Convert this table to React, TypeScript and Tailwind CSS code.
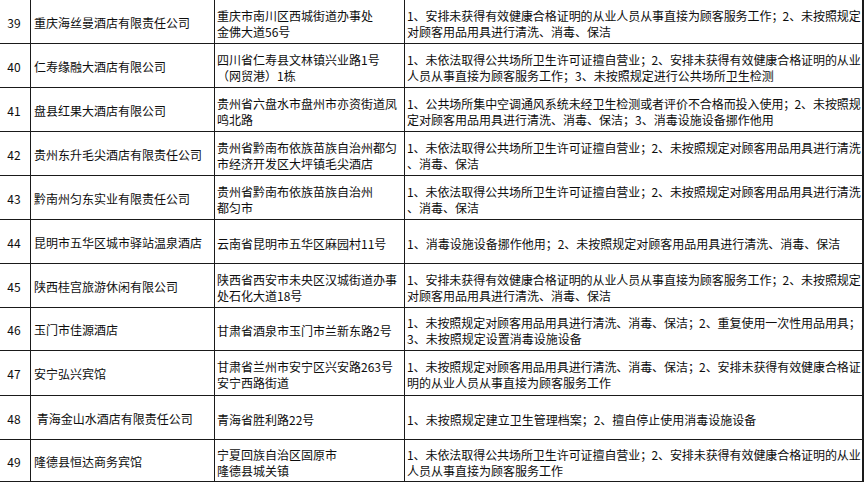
import React from "react";

interface Row {
  no: number;
  name: string;
  address: string[];
  issues: string[];
  h: string;
}

const ISSUE_A = [
  "1、安排未获得有效健康合格证明的从业人员从事直接为顾客服务工作；2、未按照规定",
  "对顾客用品用具进行清洗、消毒、保洁",
];
const ISSUE_B = [
  "1、未依法取得公共场所卫生许可证擅自营业；2、未按照规定对顾客用品用具进行清洗",
  "、消毒、保洁",
];

const ROWS: Row[] = [
  { no: 39, name: "重庆海丝曼酒店有限责任公司", address: ["重庆市南川区西城街道办事处", "金佛大道56号"], issues: ISSUE_A, h: "h-[44px]" },
  {
    no: 40,
    name: "仁寿缘融大酒店有限公司",
    address: ["四川省仁寿县文林镇兴业路1号", "（网贸港）1栋"],
    issues: [
      "1、未依法取得公共场所卫生许可证擅自营业；2、安排未获得有效健康合格证明的从业",
      "人员从事直接为顾客服务工作；3、未按照规定进行公共场所卫生检测",
    ],
    h: "h-[44px]",
  },
  {
    no: 41,
    name: "盘县红果大酒店有限公司",
    address: ["贵州省六盘水市盘州市亦资街道凤", "鸣北路"],
    issues: [
      "1、公共场所集中空调通风系统未经卫生检测或者评价不合格而投入使用；2、未按照规",
      "定对顾客用品用具进行清洗、消毒、保洁；3、消毒设施设备挪作他用",
    ],
    h: "h-[44px]",
  },
  { no: 42, name: "贵州东升毛尖酒店有限责任公司", address: ["贵州省黔南布依族苗族自治州都匀", "市经济开发区大坪镇毛尖酒店"], issues: ISSUE_B, h: "h-[44px]" },
  { no: 43, name: "黔南州匀东实业有限责任公司", address: ["贵州省黔南布依族苗族自治州", "都匀市"], issues: ISSUE_B, h: "h-[44px]" },
  {
    no: 44,
    name: "昆明市五华区城市驿站温泉酒店",
    address: ["云南省昆明市五华区麻园村11号"],
    issues: ["1、消毒设施设备挪作他用；2、未按照规定对顾客用品用具进行清洗、消毒、保洁"],
    h: "h-[44px]",
  },
  { no: 45, name: "陕西桂宫旅游休闲有限公司", address: ["陕西省西安市未央区汉城街道办事", "处石化大道18号"], issues: ISSUE_A, h: "h-[44px]" },
  {
    no: 46,
    name: "玉门市佳源酒店",
    address: ["甘肃省酒泉市玉门市兰新东路2号"],
    issues: [
      "1、未按照规定对顾客用品用具进行清洗、消毒、保洁；2、重复使用一次性用品用具；",
      "3、未按照规定设置消毒设施设备",
    ],
    h: "h-[43px]",
  },
  {
    no: 47,
    name: "安宁弘兴宾馆",
    address: ["甘肃省兰州市安宁区兴安路263号", "安宁西路街道"],
    issues: [
      "1、未按照规定对顾客用品用具进行清洗、消毒、保洁；2、安排未获得有效健康合格证",
      "明的从业人员从事直接为顾客服务工作",
    ],
    h: "h-[45px]",
  },
  {
    no: 48,
    name: "\u00a0青海金山水酒店有限责任公司",
    address: ["青海省胜利路22号"],
    issues: ["1、未按照规定建立卫生管理档案；2、擅自停止使用消毒设施设备"],
    h: "h-[44px]",
  },
  {
    no: 49,
    name: "隆德县恒达商务宾馆",
    address: ["宁夏回族自治区固原市", "隆德县城关镇"],
    issues: [
      "1、未依法取得公共场所卫生许可证擅自营业；2、安排未获得有效健康合格证明的从业",
      "人员从事直接为顾客服务工作",
    ],
    h: "h-[41px]",
  },
];

// full lines are squeezed a little and then stretched to the cell edge
function Lines({ lines, justify }: { lines: string[]; justify?: boolean }) {
  return (
    <div className="w-full">
      {lines.map((l, i) => (
        <div
          key={i}
          className={
            justify && i < lines.length - 1
              ? "whitespace-nowrap tracking-[-0.8px] text-justify [text-align-last:justify]"
              : "whitespace-nowrap"
          }
        >
          {l}
        </div>
      ))}
    </div>
  );
}

export default function App() {
  return (
    <div
      lang="zh-CN"
      className="w-[868px] h-[482px] bg-white overflow-hidden text-[12px] leading-[16px] text-[#0d0d0d] [font-family:'Noto_Sans_CJK_SC','Liberation_Sans',sans-serif]"
    >
      <div className="w-[864px] border-r-2 border-b-2 border-[#1a1a1a]">
        {ROWS.map((r, idx) => (
          <div
            key={r.no}
            className={`flex ${r.h} ${idx < ROWS.length - 1 ? "border-b border-[#1a1a1a]" : ""}`}
          >
            <div className="w-[31px] shrink-0 border-r border-[#1a1a1a] flex items-center justify-center pt-[2px] pr-[2px]">
              {r.no}
            </div>
            <div className="w-[184px] shrink-0 border-r border-[#1a1a1a] flex items-center pl-[3px] pt-[2px] whitespace-pre">
              {r.name}
            </div>
            <div className="w-[190px] shrink-0 border-r border-[#1a1a1a] flex items-center pl-[2px] pt-[4px]">
              <Lines lines={r.address} />
            </div>
            <div className="flex-1 min-w-0 flex items-center pl-[2px] pr-[2px] pt-[4px]">
              <Lines lines={r.issues} justify />
            </div>
          </div>
        ))}
      </div>
    </div>
  );
}
